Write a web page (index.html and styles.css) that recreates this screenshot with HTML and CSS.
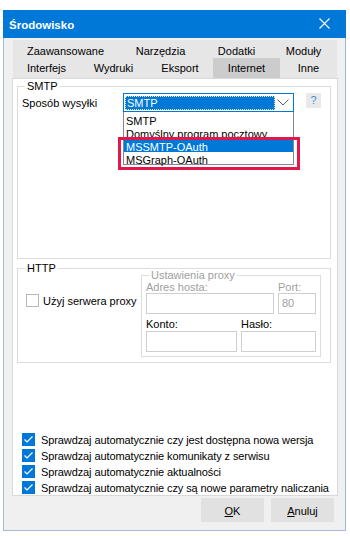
FILE: index.html
```html
<!DOCTYPE html>
<html>
    <head>
        <title>Środowisko</title>
        <link rel="stylesheet" href="styles.css">
    </head>
    <body>
        <div class="window">
            <div class="titlebar">
                <span class="title">Środowisko</span>
                <svg class="close" width="11" height="11" viewBox="0 0 11 11">
                    <path d="M0.5 0.5 L10.5 10.5 M10.5 0.5 L0.5 10.5" stroke="#fff" stroke-width="1.1" fill="none"/>
                </svg>
            </div>

            <div class="dialog">
                <div class="tabs">
                    <div class="tab-row">
                        <span class="tab w105">Zaawansowane</span>
                        <span class="tab w85">Narzędzia</span>
                        <span class="tab w67">Dodatki</span>
                        <span class="tab w67">Moduły</span>
                    </div>
                    <div class="tab-row lower">
                        <span class="tab w67">Interfejs</span>
                        <span class="tab w67">Wydruki</span>
                        <span class="tab w66">Eksport</span>
                        <span class="tab w67 active">Internet</span>
                        <span class="tab w57">Inne</span>
                    </div>
                </div>

                <div class="panel">
                    <fieldset class="group smtp">
                        <legend>SMTP</legend>
                        <div class="field-row">
                            <span class="label">Sposób wysyłki</span>
                            <div class="combo-wrap">
                                <div class="combo">
                                    <span class="combo-value">SMTP</span>
                                    <svg class="chevron" width="12" height="7" viewBox="0 0 12 7">
                                        <path d="M0.5 0.5 L6 6 L11.5 0.5" stroke="#606060" stroke-width="1" fill="none"/>
                                    </svg>
                                </div>
                                <ul class="dropdown">
                                    <li>SMTP</li>
                                    <li>Domyślny program pocztowy</li>
                                    <li class="selected">MSSMTP-OAuth</li>
                                    <li>MSGraph-OAuth</li>
                                </ul>
                                <div class="highlight"></div>
                            </div>
                            <span class="help">?</span>
                        </div>
                    </fieldset>

                    <fieldset class="group http">
                        <legend>HTTP</legend>
                        <div class="http-body">
                            <label class="proxy-check">
                                <span class="box"></span>
                                <span>Użyj serwera proxy</span>
                            </label>
                            <fieldset class="group proxy">
                                <legend>Ustawienia proxy</legend>
                                <div class="proxy-row">
                                    <div class="field host">
                                        <span class="field-label dim">Adres hosta:</span>
                                        <span class="input"></span>
                                    </div>
                                    <div class="field port">
                                        <span class="field-label dim">Port:</span>
                                        <span class="input">80</span>
                                    </div>
                                </div>
                                <div class="proxy-row second">
                                    <div class="field account">
                                        <span class="field-label">Konto:</span>
                                        <span class="input"></span>
                                    </div>
                                    <div class="field password">
                                        <span class="field-label">Hasło:</span>
                                        <span class="input"></span>
                                    </div>
                                </div>
                            </fieldset>
                        </div>
                    </fieldset>

                    <div class="checks">
                        <div class="check-row"><span class="box checked"><svg width="13" height="13" viewBox="0 0 13 13"><path d="M2.5 6.5 L5 9 L10.5 3.5" stroke="#fff" stroke-width="1.2" fill="none"/></svg></span><span class="check-text">Sprawdzaj automatycznie czy jest dostępna nowa wersja</span></div>
                        <div class="check-row"><span class="box checked"><svg width="13" height="13" viewBox="0 0 13 13"><path d="M2.5 6.5 L5 9 L10.5 3.5" stroke="#fff" stroke-width="1.2" fill="none"/></svg></span><span class="check-text">Sprawdzaj automatycznie komunikaty z serwisu</span></div>
                        <div class="check-row"><span class="box checked"><svg width="13" height="13" viewBox="0 0 13 13"><path d="M2.5 6.5 L5 9 L10.5 3.5" stroke="#fff" stroke-width="1.2" fill="none"/></svg></span><span class="check-text">Sprawdzaj automatycznie aktualności</span></div>
                        <div class="check-row"><span class="box checked"><svg width="13" height="13" viewBox="0 0 13 13"><path d="M2.5 6.5 L5 9 L10.5 3.5" stroke="#fff" stroke-width="1.2" fill="none"/></svg></span><span class="check-text">Sprawdzaj automatycznie czy są nowe parametry naliczania</span></div>
                    </div>
                </div>

                <div class="buttons">
                    <button class="btn"><u>O</u>K</button>
                    <button class="btn"><u>A</u>nuluj</button>
                </div>
            </div>
        </div>
    </body>
</html>
```

FILE: styles.css
```css
* { box-sizing: border-box; }
body {
    margin: 0;
    background: #fff;
    font-family: "Liberation Sans", Arial, sans-serif;
    font-size: 11px;
    color: #000;
}
.window {
    margin: 10px 0 0 3px;
    width: 343px;
    height: 521px;
    border: 1px solid #a9b9d9;
    border-top: none;
    background: #f0f0f0;
}
.titlebar {
    height: 28px;
    margin: 0 -1px;
    background: #0078d7;
    color: #fff;
    display: flex;
    align-items: center;
    justify-content: space-between;
    padding: 0 16px 0 6px;
}
.title { font-weight: bold; font-size: 11.5px; padding-top: 1px; }
.close { display: block; margin-top: -1px; }

.dialog { padding: 2px 0 0 8px; }
.tabs { margin-left: 1px; width: 324px; }
.tab-row { display: flex; height: 18px; background: #e6e6e6; }
.tab-row.lower { height: 20px; }
.tab { text-align: center; line-height: 14px; padding-top: 4px; }
.tab-row.lower .tab { line-height: 20px; padding-top: 0; }
.tab.active { background: #cccccc; }
.w105 { width: 105px; }
.w85 { width: 85px; }
.w67 { width: 67px; }
.w66 { width: 66px; }
.w57 { width: 57px; }

.panel {
    width: 326px;
    height: 418px;
    border: 1px solid #d9d9d9;
    background: #fff;
    display: flex;
    flex-direction: column;
}
.group {
    margin: 0;
    border: 1px solid #dcdcdc;
    padding: 0 4px;
    min-width: 0;
}
.group legend {
    margin-left: 3px;
    padding: 0 2px;
    line-height: 12px;
}
.smtp {
    margin: 1px 0 0 4px;
    width: 314px;
    height: 179px;
    padding-top: 1px;
}
.field-row { display: flex; align-items: flex-start; }
.label { width: 101px; line-height: 19px; padding-top: 1px; }
.combo-wrap { position: relative; width: 171px; }
.combo {
    height: 19px;
    border: 1px solid #0078d7;
    padding: 1px;
    display: flex;
    align-items: center;
}
.combo-value {
    width: 150px;
    height: 14px;
    background: #0078d7;
    color: #fff;
    line-height: 14px;
    padding-left: 2px;
    outline: 1px dotted #f2e9a6;
    outline-offset: -1px;
}
.chevron { display: block; margin-left: 2px; }
.dropdown {
    position: absolute;
    top: 19px;
    left: 0;
    width: 171px;
    height: 53px;
    margin: 0;
    padding: 0;
    list-style: none;
    background: #fff;
    border: 1px solid #828790;
    border-top: none;
}
.dropdown li {
    height: 13px;
    padding: 3px 0 0 2px;
    line-height: 10px;
    white-space: nowrap;
}
.dropdown li:first-child { margin-top: 1px; }
.dropdown li.selected { background: #0078d7; color: #fff; }
.highlight {
    position: absolute;
    left: -5px;
    top: 44px;
    width: 182px;
    height: 33px;
    border: 3px solid #e3174a;
}
.help {
    margin-left: 12px;
    width: 15px;
    height: 15px;
    background: #e9e9e9;
    color: #3d8fdb;
    text-align: center;
    line-height: 15px;
}

.http {
    margin: 3px 0 0 4px;
    width: 314px;
    height: 101px;
}
.http-body { display: flex; }
.proxy-check {
    width: 119px;
    display: flex;
    align-items: center;
    padding: 20px 0 0 4px;
    align-self: flex-start;
}
.proxy-check .box {
    width: 13px;
    height: 13px;
    border: 1px solid #b8b8b8;
    margin-right: 4px;
}
.proxy {
    margin-top: -5px;
    width: 180px;
    height: 88px;
}
.proxy legend { color: #a0a0a0; }
.proxy-row { display: flex; gap: 4px; }
.proxy-row.second { margin-top: 4px; }
.field { display: flex; flex-direction: column; }
.field-label { line-height: 12px; }
.field-label.dim { color: #a0a0a0; }
.input {
    height: 21px;
    border: 1px solid #cfcfcf;
    color: #a0a0a0;
    padding-left: 3px;
    line-height: 19px;
}
.host .input { width: 128px; }
.port .input { width: 38px; }
.account .input { width: 91px; margin-top: 1px; }
.password .input { width: 75px; margin-top: 1px; }

.checks { margin-top: auto; padding-left: 9px; }
.check-row { display: flex; align-items: flex-start; height: 16px; }
.box.checked {
    width: 13px;
    height: 13px;
    margin-top: 2px;
    background: #0078d7;
    display: block;
}
.box.checked svg { display: block; }
.check-text { line-height: 16px; padding: 1px 0 0 6px; white-space: nowrap; letter-spacing: -0.1px; }

.buttons {
    display: flex;
    justify-content: flex-end;
    gap: 7px;
    margin-top: 2px;
    padding-right: 11px;
}
.btn {
    width: 63px;
    height: 24px;
    border: 1px solid #e1e1e1;
    background: #e1e1e1;
    font-family: inherit;
    font-size: 11px;
    color: #000;
    padding: 2px 0 0;
}
```
